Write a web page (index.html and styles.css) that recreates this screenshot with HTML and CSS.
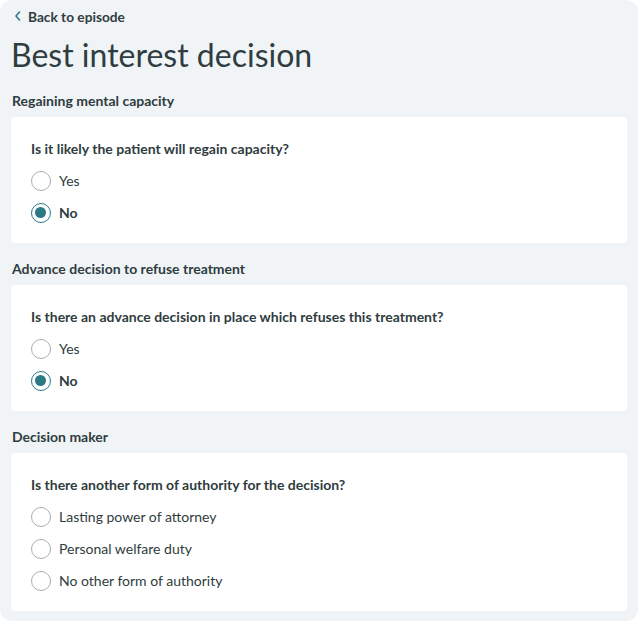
FILE: index.html
```html
<!DOCTYPE html>
<html lang="en">
<head>
<meta charset="utf-8">
<title>Best interest decision</title>
<link rel="stylesheet" href="styles.css">
</head>
<body>
<main class="page">
  <a class="back" href="#">
    <svg class="back-icon" width="8" height="10" viewBox="0 0 8 10" aria-hidden="true"><path d="M5.5 1 L2 5 L5.5 9" fill="none" stroke="#2b7a85" stroke-width="1.6" stroke-linecap="round" stroke-linejoin="round"/></svg>
    <span>Back to episode</span>
  </a>
  <h1 class="title">Best interest decision</h1>

  <section class="section">
    <h2 class="section-title">Regaining mental capacity</h2>
    <div class="card">
      <p class="question">Is it likely the patient will regain capacity?</p>
      <div class="options">
        <label class="option"><span class="radio"></span><span class="label">Yes</span></label>
        <label class="option selected"><span class="radio"></span><span class="label">No</span></label>
      </div>
    </div>
  </section>

  <section class="section">
    <h2 class="section-title">Advance decision to refuse treatment</h2>
    <div class="card">
      <p class="question">Is there an advance decision in place which refuses this treatment?</p>
      <div class="options">
        <label class="option"><span class="radio"></span><span class="label">Yes</span></label>
        <label class="option selected"><span class="radio"></span><span class="label">No</span></label>
      </div>
    </div>
  </section>

  <section class="section">
    <h2 class="section-title">Decision maker</h2>
    <div class="card">
      <p class="question">Is there another form of authority for the decision?</p>
      <div class="options">
        <label class="option"><span class="radio"></span><span class="label">Lasting power of attorney</span></label>
        <label class="option"><span class="radio"></span><span class="label">Personal welfare duty</span></label>
        <label class="option"><span class="radio"></span><span class="label">No other form of authority</span></label>
      </div>
    </div>
  </section>
</main>
</body>
</html>
```

FILE: styles.css
```css
* { box-sizing: border-box; }
html, body { margin: 0; padding: 0; background: #ffffff; }
body {
  font-family: Lato, "Open Sans", sans-serif;
  color: #2f3c40;
  width: 638px;
}
.page {
  background: #f0f4f7;
  border-radius: 12px;
  padding: 6px 11px 10px 11px;
  width: 638px;
  display: flex;
  flex-direction: column;
}
.back {
  display: flex;
  align-items: center;
  gap: 6px;
  padding-left: 3px;
  height: 20px;
  font-size: 13.7px;
  font-weight: 700;
  color: #2f3c40;
  text-decoration: none;
}
.back-icon { display: block; }
.title {
  margin: 9px 0 0 0;
  font-size: 32px;
  font-weight: 400;
  line-height: 40px;
  color: #2f3c40;
  padding-left: 0;
}
.section { display: flex; flex-direction: column; }
.section-title {
  margin: 14px 0 0 0;
  font-size: 14px;
  font-weight: 700;
  line-height: 24px;
  padding-left: 1px;
}
.section + .section .section-title { margin-top: 14px; }
.card {
  margin-top: 4px;
  background: #ffffff;
  border-radius: 4px;
  padding: 20px 20px 20px 20px;
}
.question {
  margin: 0;
  font-size: 14px;
  font-weight: 700;
  line-height: 24px;
}
.options {
  margin-top: 10px;
  display: flex;
  flex-direction: column;
  gap: 12px;
}
.option {
  display: flex;
  align-items: center;
  gap: 8px;
  height: 20px;
  font-size: 14px;
  line-height: 20px;
}
.radio {
  width: 20px;
  height: 20px;
  border-radius: 50%;
  border: 1px solid #a9adae;
  background: #fff;
  flex: none;
  position: relative;
}
.selected .radio {
  border: 1.5px solid #2b7a85;
}
.selected .radio::after {
  content: "";
  position: absolute;
  left: 3px;
  top: 3px;
  width: 11px;
  height: 11px;
  border-radius: 50%;
  background: #2b7a85;
}
.selected .label { font-weight: 700; }
```
